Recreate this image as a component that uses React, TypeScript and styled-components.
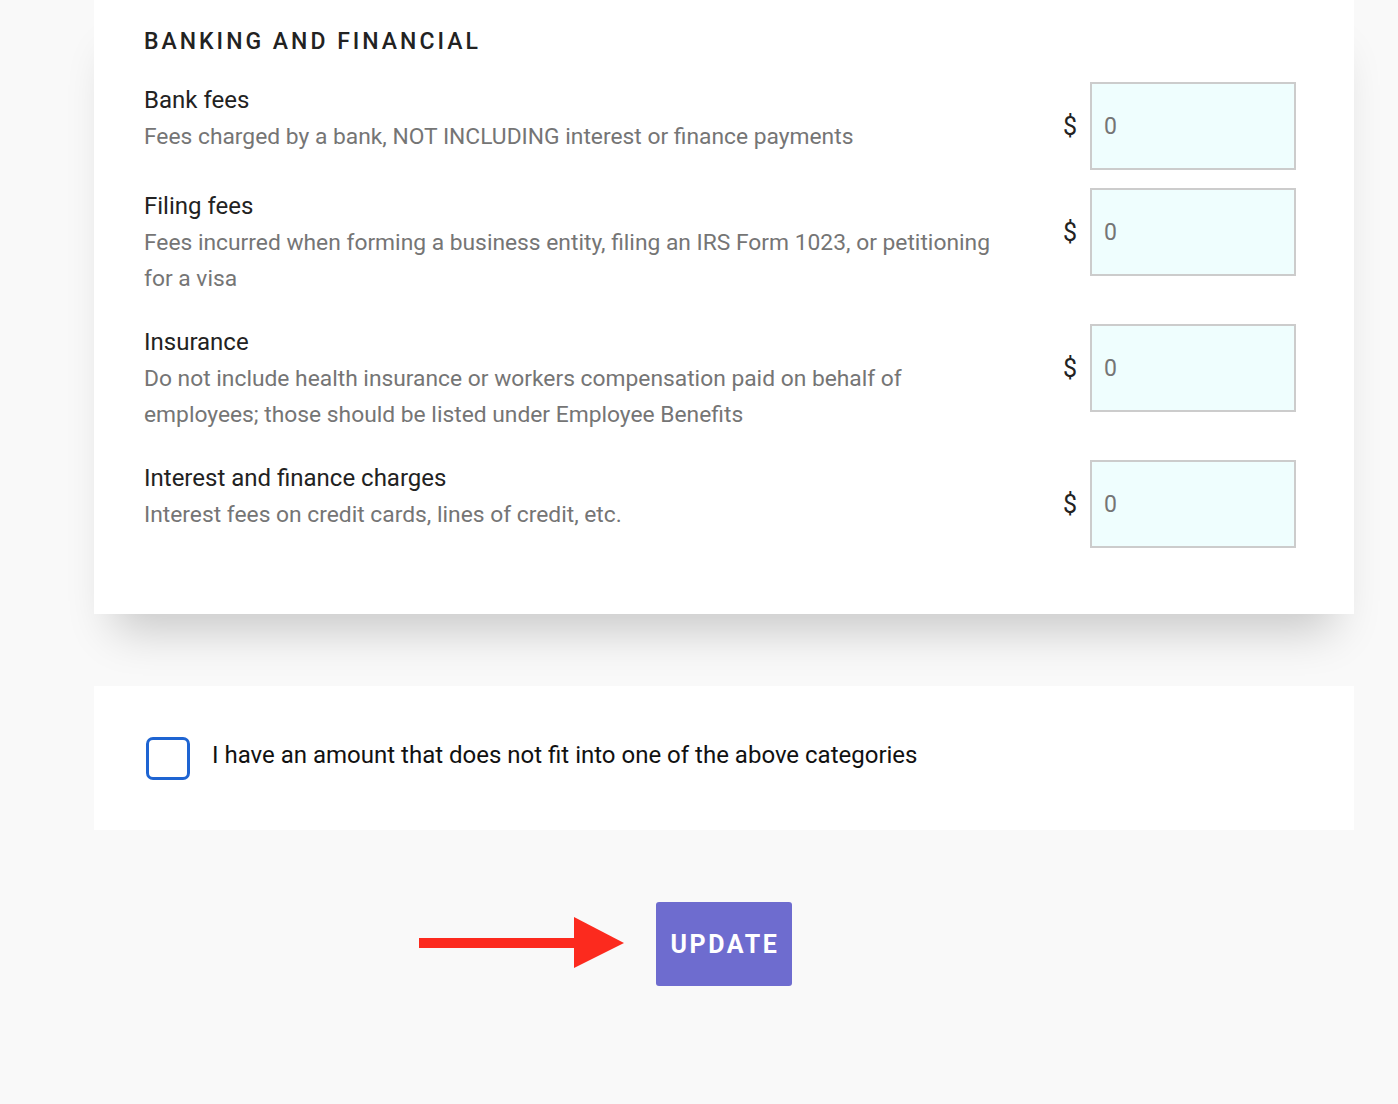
import React from "react";
import styled, { createGlobalStyle } from "styled-components";

const GlobalStyle = createGlobalStyle`
  html, body {
    margin: 0;
    padding: 0;
    background: #f9f9f9;
    font-family: Roboto, "Liberation Sans", Arial, sans-serif;
    color: #222;
  }
  * { box-sizing: border-box; }
`;

const Page = styled.div`
  width: 1260px;
  margin-left: 94px;
  padding-bottom: 118px;
`;

const Card = styled.section`
  background: #fff;
  padding: 28px 58px 48px 50px;
  box-shadow: 0 36px 44px -20px rgba(0, 0, 0, 0.2);
  position: relative;
  z-index: 1;
`;

const Heading = styled.h2`
  margin: 0 0 26px;
  font-size: 23px;
  line-height: 28px;
  font-weight: 500;
  letter-spacing: 3px;
  text-transform: uppercase;
  color: #222;
`;

const Row = styled.div`
  display: flex;
  align-items: flex-start;
  justify-content: space-between;
`;

const TextBlock = styled.div`
  width: 856px;
  padding-bottom: 28px;
`;

const Label = styled.div`
  font-size: 24px;
  line-height: 36px;
  color: #222;
`;

const Description = styled.div`
  font-size: 22.8px;
  line-height: 36px;
  color: #757575;
  padding-top: 1px;
  margin-bottom: -1px;
`;

const AmountGroup = styled.label`
  display: flex;
  align-items: center;
  gap: 13px;
  margin-bottom: 18px;
`;

const Currency = styled.span`
  font-size: 25px;
  color: #222;
`;

const AmountInput = styled.input`
  width: 206px;
  height: 88px;
  border: 2px solid #cccccc;
  background: #effefe;
  padding: 0 12px;
  font-family: Roboto, "Liberation Sans", Arial, sans-serif;
  font-size: 23px;
  color: #757575;
  outline: none;
`;

const CheckCard = styled.section`
  margin-top: 72px;
  background: #fff;
  height: 144px;
  padding: 0 50px 0 52px;
  display: flex;
  align-items: center;
  gap: 22px;
  position: relative;
  z-index: 2;
`;

const CheckBox = styled.span`
  width: 44px;
  height: 43px;
  border: 3px solid #1e64d2;
  border-radius: 7px;
  flex: none;
`;

const CheckText = styled.span`
  font-size: 24px;
  line-height: 32px;
  color: #111;
  margin-bottom: 6px;
`;

const ActionRow = styled.div`
  margin-top: 72px;
  display: flex;
  justify-content: center;
`;

const ButtonWrap = styled.div`
  position: relative;
`;

const UpdateButton = styled.button`
  width: 136px;
  height: 84px;
  border: none;
  border-radius: 3px;
  background: #6e6ccf;
  color: #fff;
  font-family: Roboto, "Liberation Sans", Arial, sans-serif;
  font-size: 25px;
  font-weight: 700;
  letter-spacing: 2.6px;
  padding: 0 0 0 2px;
`;

const Arrow = styled.svg`
  position: absolute;
  left: -237px;
  top: 14px;
`;

const items = [
  {
    label: "Bank fees",
    desc: "Fees charged by a bank, NOT INCLUDING interest or finance payments",
  },
  {
    label: "Filing fees",
    desc: "Fees incurred when forming a business entity, filing an IRS Form 1023, or petitioning for a visa",
  },
  {
    label: "Insurance",
    desc: "Do not include health insurance or workers compensation paid on behalf of employees; those should be listed under Employee Benefits",
  },
  {
    label: "Interest and finance charges",
    desc: "Interest fees on credit cards, lines of credit, etc.",
  },
];

export default function App() {
  return (
    <>
      <GlobalStyle />
      <Page>
        <Card>
          <Heading>Banking and Financial</Heading>
          {items.map((it) => (
            <Row key={it.label}>
              <TextBlock>
                <Label>{it.label}</Label>
                <Description>{it.desc}</Description>
              </TextBlock>
              <AmountGroup>
                <Currency>$</Currency>
                <AmountInput defaultValue="0" />
              </AmountGroup>
            </Row>
          ))}
        </Card>
        <CheckCard>
          <CheckBox />
          <CheckText>I have an amount that does not fit into one of the above categories</CheckText>
        </CheckCard>
        <ActionRow>
          <ButtonWrap>
            <Arrow width="206" height="54" viewBox="0 0 206 54">
              <rect x="0" y="22" width="160" height="10" fill="#fc2a1e" />
              <polygon points="155,1 205,27 155,52" fill="#fc2a1e" />
            </Arrow>
            <UpdateButton>UPDATE</UpdateButton>
          </ButtonWrap>
        </ActionRow>
      </Page>
    </>
  );
}
